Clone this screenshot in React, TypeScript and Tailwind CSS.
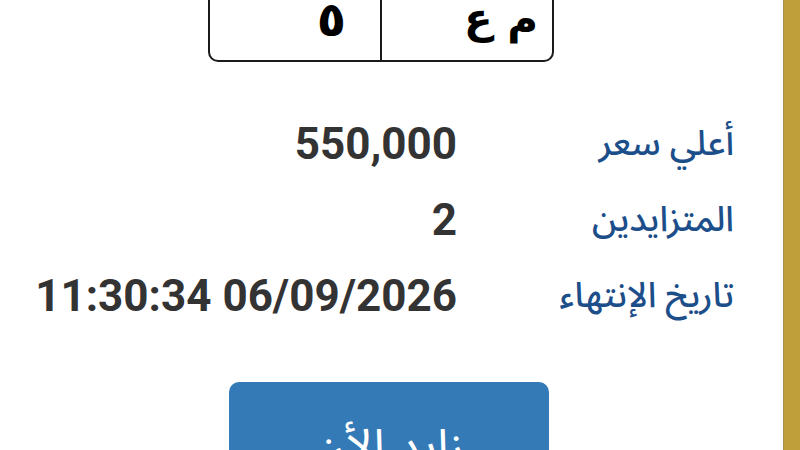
import React from 'react';

const rows = [
  { label: 'أعلي سعر', value: '550,000' },
  { label: 'المتزايدين', value: '2' },
  { label: 'تاريخ الإنتهاء', value: '11:30:34 06/09/2026' },
];

export default function App() {
  return (
    <div className="flex h-[450px] w-[800px] overflow-hidden bg-white">
      <div className="flex-1 flex flex-col">
        {/* Plate image (top cut off) */}
        <div className="pl-[208px]">
          <div className="flex h-[62px] w-[346px] border-x-2 border-b-2 border-[#1a1a1a] rounded-b-[10px]">
            <div className="flex w-[172px] items-end justify-end border-r-2 border-[#1a1a1a] pr-[34px] pb-[20px]">
              <span className="text-[48px] leading-[42px] font-bold text-black [font-family:'DejaVu_Sans',sans-serif]">٥</span>
            </div>
            <div className="flex flex-1 items-end justify-end pr-[14px] pb-[20px]">
              <span dir="rtl" className="text-[42px] leading-[42px] font-bold text-black [font-family:'DejaVu_Sans',sans-serif]">م ع</span>
            </div>
          </div>
        </div>

        {/* Auction details */}
        <div className="mt-[57px] flex flex-col gap-[26px]">
          {rows.map((row) => (
            <div key={row.label} className="flex h-[50px] items-center">
              <div className="w-[457px] text-right text-[44px] font-bold leading-none text-[#333333] [font-family:Roboto,sans-serif]">
                {row.value}
              </div>
              <div dir="rtl" className="w-[277px] text-right text-[35px] font-medium leading-none text-[#1c4e8a] [font-family:'Noto_Sans_Arabic','DejaVu_Sans',sans-serif]">
                {row.label}
              </div>
            </div>
          ))}
        </div>

        {/* Bid button */}
        <div className="mt-[61px] pl-[229px]">
          <button className="h-[100px] w-[320px] rounded-[10px] bg-[#337ab7] pt-[32px] text-[48px] leading-none text-white [font-family:'Noto_Sans_Arabic','DejaVu_Sans',sans-serif]">
            زايد الأن
          </button>
        </div>
      </div>
      <div className="w-[17px] bg-[#bf9f3a] border-l border-[#a8914a]" />
    </div>
  );
}
